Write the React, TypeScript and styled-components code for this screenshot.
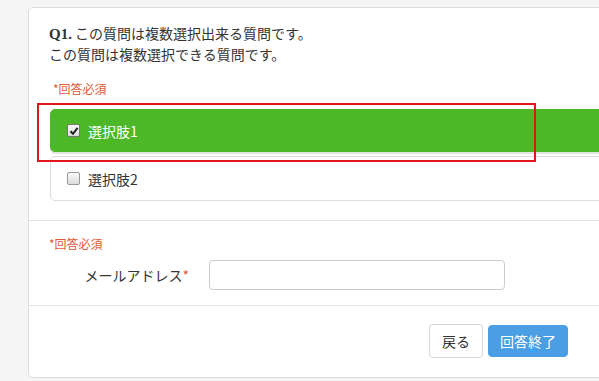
import React, { useState } from 'react';
import styled, { createGlobalStyle } from 'styled-components';

const GlobalStyle = createGlobalStyle`
  html, body {
    margin: 0;
    padding: 0;
    background: #f5f5f5;
    overflow: hidden;
  }
  body {
    font-family: "Noto Sans CJK JP", "Noto Sans", sans-serif;
    color: #333;
  }
`;

interface Choice {
    label: string;
}

const choices: Choice[] = [{ label: '選択肢1' }, { label: '選択肢2' }];

const App: React.FC = () => {
    const [selected, setSelected] = useState<number[]>([0]);
    const [email, setEmail] = useState('');

    const toggle = (i: number) => {
        setSelected((prev) => (prev.includes(i) ? prev.filter((x) => x !== i) : [...prev, i]));
    };

    return (
        <Page>
            <GlobalStyle />
            <Card>
                <Section>
                    <Question>
                        <QNum>Q1.</QNum> この質問は複数選択出来る質問です。
                        <br />
                        この質問は複数選択できる質問です。
                    </Question>
                    <Required $indent={4} $top={16}>*回答必須</Required>
                    <Options>
                        {choices.map((c, i) => {
                            const on = selected.includes(i);
                            return (
                                <Option key={c.label} $active={on} onClick={() => toggle(i)}>
                                    <Box $checked={on}>
                                        {on && (
                                            <svg width="10" height="10" viewBox="0 0 10 10">
                                                <path d="M1.5 5.2 L4 7.8 L8.6 1.8" fill="none" stroke="#222" strokeWidth="2" />
                                            </svg>
                                        )}
                                    </Box>
                                    {c.label}
                                </Option>
                            );
                        })}
                        <Highlight />
                    </Options>
                </Section>
                <Section $pad="14px 0 15px 20px">
                    <Required>*回答必須</Required>
                    <FormRow>
                        <FieldLabel>
                            メールアドレス<Star>*</Star>
                        </FieldLabel>
                        <TextInput value={email} onChange={(e) => setEmail(e.target.value)} />
                    </FormRow>
                </Section>
                <Footer>
                    <Button>戻る</Button>
                    <Button $primary>回答終了</Button>
                </Footer>
            </Card>
        </Page>
    );
};

const Page = styled.div`
  height: 381px;
  padding: 7px 0 0 28px;
  box-sizing: border-box;
`;

const Card = styled.div`
  width: 640px;
  height: 371px;
  box-sizing: border-box;
  background: #fff;
  border: 1px solid #dcdcdc;
  border-radius: 5px;
`;

const Section = styled.div<{ $pad?: string }>`
  padding: ${(p) => p.$pad || '15px 0 19px 20px'};
  border-bottom: 1px solid #e2e2e2;
`;

const Question = styled.div`
  font-size: 14px;
  line-height: 20px;
  color: #333;
`;

const QNum = styled.span`
  font-family: "Liberation Serif", serif;
  font-weight: bold;
  font-size: 15px;
`;

const Required = styled.div<{ $indent?: number; $top?: number }>`
  margin: ${(p) => p.$top || 0}px 0 0 ${(p) => p.$indent || 0}px;
  font-size: 12px;
  line-height: 18px;
  color: #dd5a3a;
`;

const Options = styled.div`
  position: relative;
  display: flex;
  flex-direction: column;
  gap: 4px;
  margin: 11px 20px 0 1px;
`;

const Option = styled.div<{ $active: boolean }>`
  display: flex;
  align-items: center;
  gap: 8px;
  height: ${(p) => (p.$active ? '43px' : '45px')};
  box-sizing: border-box;
  padding-left: 16px;
  border-radius: 5px;
  font-size: 14px;
  cursor: pointer;
  background: ${(p) => (p.$active ? '#4cb828' : '#fff')};
  color: ${(p) => (p.$active ? '#fff' : '#333')};
  border: 1px solid ${(p) => (p.$active ? '#4cb828' : '#dedede')};
  box-shadow: ${(p) => (p.$active ? '0 2px 0 #dfe7df' : 'none')};
`;

const Box = styled.span<{ $checked: boolean }>`
  display: inline-flex;
  align-items: center;
  justify-content: center;
  width: 11px;
  height: 11px;
  border: 1px solid ${(p) => (p.$checked ? '#777' : '#999')};
  border-radius: 2px;
  background: linear-gradient(#fafafa, #dcdcdc);
`;

const Highlight = styled.div`
  position: absolute;
  left: -13px;
  top: -6px;
  width: 499px;
  height: 59px;
  box-sizing: border-box;
  border: 2px solid #e0141b;
  pointer-events: none;
`;

const FormRow = styled.div`
  display: flex;
  align-items: center;
  gap: 20px;
  margin-top: 7px;
`;

const FieldLabel = styled.label`
  width: 140px;
  text-align: right;
  font-size: 14px;
  line-height: 20px;
  color: #333;
`;

const Star = styled.span`
  color: #dd5a3a;
`;

const TextInput = styled.input`
  width: 296px;
  height: 30px;
  box-sizing: border-box;
  border: 1px solid #ccc;
  border-radius: 4px;
  padding: 0 8px;
  font-size: 14px;
  outline: none;
`;

const Footer = styled.div`
  display: flex;
  gap: 5px;
  padding: 18px 0 0 400px;
`;

const Button = styled.button<{ $primary?: boolean }>`
  height: ${(p) => (p.$primary ? '32px' : '34px')};
  margin-top: ${(p) => (p.$primary ? '1px' : '0')};
  padding: 0 ${(p) => (p.$primary ? '11px' : '12px')};
  font-family: "Noto Sans CJK JP", sans-serif;
  font-size: 14px;
  line-height: 20px;
  border-radius: 4px;
  cursor: pointer;
  border: 1px solid ${(p) => (p.$primary ? '#4a9ee3' : '#d6d6d6')};
  background: ${(p) => (p.$primary ? '#4a9ee3' : '#fff')};
  color: ${(p) => (p.$primary ? '#fff' : '#333')};
`;

export default App;
